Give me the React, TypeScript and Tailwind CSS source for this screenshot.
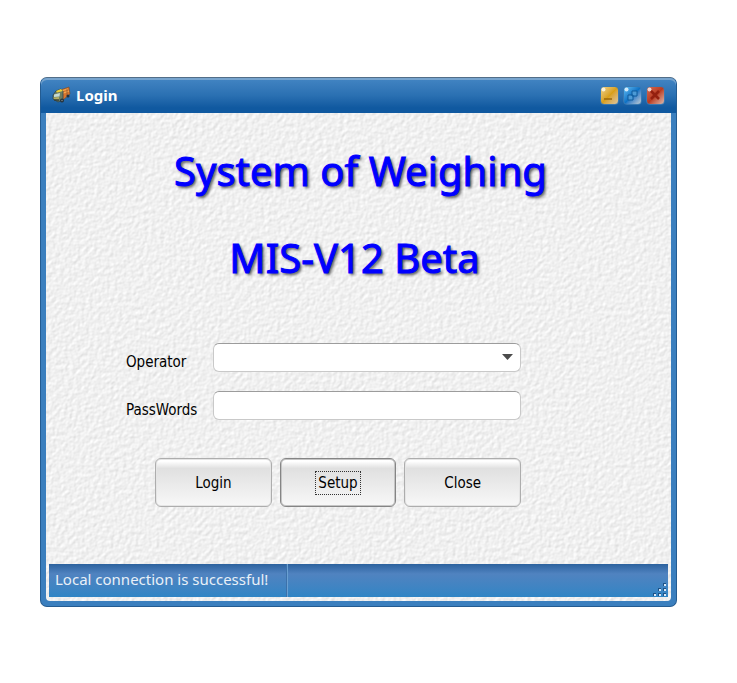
import React from 'react';

const uiFont = "font-['DejaVu_Sans_Condensed','DejaVu_Sans',sans-serif]";

function TruckIcon() {
  return (
    <svg width="20" height="18" viewBox="0 0 20 18" aria-hidden="true">
      <path d="M8 4 17 1 18 8 11 14 8 11Z" fill="#d9752e" stroke="#6b4a2e" strokeWidth=".6" />
      <path d="M9 5 16 3M10 7.5 17 5" stroke="#f5ad55" strokeWidth="1.2" />
      <path d="M15 3v7" stroke="#8d5a32" strokeWidth=".8" />
      <path d="M1 9 4 5 9 3 11 5 11 14 6 16 1 13Z" fill="#6b7c62" stroke="#2d444c" strokeWidth=".8" />
      <path d="M4 5 9 3 11 5 5 6.5Z" fill="#e9cf39" />
      <path d="M2 8.5 8 7 7.5 10.5 2 11Z" fill="#c6dcd5" />
      <path d="M1.5 11.5 7 11 7 14 2 13.5Z" fill="#b3ae62" />
      <path d="M2 14h5" stroke="#333d36" strokeWidth="1.4" />
      <circle cx="10" cy="14.5" r="2" fill="#243039" />
      <circle cx="10" cy="14.5" r=".7" fill="#8c9697" />
      <circle cx="16" cy="10" r="1.5" fill="#243039" />
    </svg>
  );
}

type CaptionKind = 'minimize' | 'restore' | 'close';

const captionStyles: Record<CaptionKind, string> = {
  minimize: 'bg-linear-to-br from-[#eed385] via-[#d9a016] to-[#dcc69b]',
  restore: 'bg-linear-to-br from-[#60bff5] via-[#0d72c4] to-[#c1ccd3]',
  close: 'bg-linear-to-br from-[#d66a52] via-[#b93b20] to-[#d8b9ae]',
};

function CaptionButton({ kind }: { kind: CaptionKind }) {
  return (
    <button
      type="button"
      aria-label={kind}
      className={`h-[19px] w-[19px] rounded-[4px] border border-[#3979b2] ${captionStyles[kind]}`}
    >
      <svg width="17" height="17" viewBox="0 0 17 17" fill="none" aria-hidden="true">
        <circle cx="2.5" cy="2.5" r="2" fill="white" fillOpacity=".75" />
        {kind === 'minimize' && <path d="M3 12h8" stroke="#98670c" strokeWidth="1.5" />}
        {kind === 'restore' && (
          <>
            <path d="M8 4h5v5H8zM4 8h5v5H4z" fill="#4c9ad6" />
            <path d="M8 4h5v5H8zM4 8h5v5H4z" stroke="#0f5a9c" strokeWidth="1" />
          </>
        )}
        {kind === 'close' && <path d="m4 4 8 8M12 4l-8 8" stroke="#94200f" strokeWidth="2.6" />}
      </svg>
    </button>
  );
}

function PaperTexture() {
  return (
    <svg className="absolute inset-0 h-full w-full" aria-hidden="true">
      <filter id="paper" x="0" y="0" width="100%" height="100%" colorInterpolationFilters="sRGB">
        <feTurbulence type="fractalNoise" baseFrequency="0.24" numOctaves="2" seed="7" result="noise" />
        <feDiffuseLighting in="noise" surfaceScale="0.26" diffuseConstant="1.18" lightingColor="#f0f0f0">
          <feDistantLight azimuth="225" elevation="58" />
        </feDiffuseLighting>
      </filter>
      <rect width="100%" height="100%" fill="#eeeeee" filter="url(#paper)" />
    </svg>
  );
}

const headingStyle = '[text-shadow:2px_2px_3px_rgba(0,0,0,0.65)] [-webkit-text-stroke:1px_#0000ff]';
const fieldStyle =
  'h-[29px] w-full appearance-none rounded-[6px] border border-[#c9c9c9] border-t-[#9c9c9c] bg-white px-2 text-[15px] outline-none';

function FormButton({ label, focused = false }: { label: string; focused?: boolean }) {
  return (
    <button
      type="button"
      className={`flex h-[49px] flex-1 items-center justify-center rounded-[6px] border bg-linear-to-b from-white from-5% via-[#e0e0e0] via-20% to-[#f8f8f8] text-[15px] leading-[22px] text-black ${
        focused ? 'border-[#858585] shadow-[inset_0_0_0_1px_#c4c4c4]' : 'border-[#adadad] shadow-[inset_0_0_0_1px_#e5e5e5]'
      }`}
    >
      <span className={focused ? 'border border-dotted border-[#333333] px-[2px] leading-[22px]' : ''}>{label}</span>
    </button>
  );
}

export default function App() {
  return (
    <main className={`min-h-screen bg-white pt-[77px] pr-[60px] pb-10 pl-10 ${uiFont}`}>
      <section className="rounded-[7px] border border-[#245c92] border-t-[#526e88] bg-[#3b7fbe] pb-[5px] shadow-[inset_0_1px_0_#7eabd2]">
        <header className="flex h-[35px] items-center rounded-t-[6px] bg-linear-to-b from-[#4385c3] via-[#2a70b2] via-50% to-[#1059a0] to-85% pr-[11px] pb-px pl-[11px] shadow-[inset_0_2px_0_#77a4ce]">
          <TruckIcon />
          <h1 className="ml-1 flex-1 font-['Noto_Sans',sans-serif] text-[15px] leading-5 font-bold text-white">
            Login
          </h1>
          <div className="flex gap-1">
            <CaptionButton kind="minimize" />
            <CaptionButton kind="restore" />
            <CaptionButton kind="close" />
          </div>
        </header>

        <div className="relative mx-[5px] overflow-hidden rounded-b-[4px]">
          <PaperTexture />
          <div className="relative">
            <div className="pt-[29px] pb-px pl-1 text-center font-['Noto_Sans',sans-serif] text-[40px] leading-[58px] text-[#0000ff]">
              <p className={headingStyle}>System of Weighing</p>
              <p className={`mt-[29px] pr-3 ${headingStyle}`}>MIS-V12 Beta</p>
            </div>

            <form className="pt-[55px] pr-[150px] pb-[57px] pl-[80px]">
              <div className="grid grid-cols-[87px_1fr] gap-y-[19px]">
                <label htmlFor="operator" className="pt-[10px] text-[15px] leading-[19px]">Operator</label>
                <div className="relative">
                  <select id="operator" className={fieldStyle} defaultValue="">
                    <option value=""></option>
                  </select>
                  <svg className="pointer-events-none absolute top-[11px] right-2 h-[6px] w-[11px]" viewBox="0 0 11 6" aria-hidden="true">
                    <path d="M0 0h11L5.5 6Z" fill="#4b4b4b" />
                  </svg>
                </div>
                <label htmlFor="password" className="pt-[10px] text-[15px] leading-[19px]">PassWords</label>
                <input id="password" type="password" className={fieldStyle} />
              </div>
              <div className="mt-[38px] flex gap-2 pl-[29px]">
                <FormButton label="Login" />
                <FormButton label="Setup" focused />
                <FormButton label="Close" />
              </div>
            </form>

            <div className="px-[3px] pb-1">
              <footer className="flex h-[33px] bg-linear-to-b from-[#2c629e] via-[#5083c0] via-30% to-[#2f85c5] font-['Noto_Sans',sans-serif] text-[15px] leading-[31px] text-[#e8f0f8]">
                <p className="w-[238px] border-r border-[#3c71aa] pl-[6px] shadow-[1px_0_0_#6aa0d2]">
                  Local connection is successful!
                </p>
                <svg className="mt-auto ml-auto" width="15" height="15" viewBox="0 0 15 15" aria-hidden="true">
                  <g fill="#1d5286">
                    <path d="M10 1h3v3h-3zM5 6h3v3H5zM10 6h3v3h-3zM0 11h3v3H0zM5 11h3v3H5zM10 11h3v3h-3z" />
                  </g>
                  <g fill="#d7e8f8">
                    <path d="M11 2h2v2h-2zM6 7h2v2H6zM11 7h2v2h-2zM1 12h2v2H1zM6 12h2v2H6zM11 12h2v2h-2z" />
                  </g>
                </svg>
              </footer>
            </div>
          </div>
        </div>
      </section>
    </main>
  );
}
